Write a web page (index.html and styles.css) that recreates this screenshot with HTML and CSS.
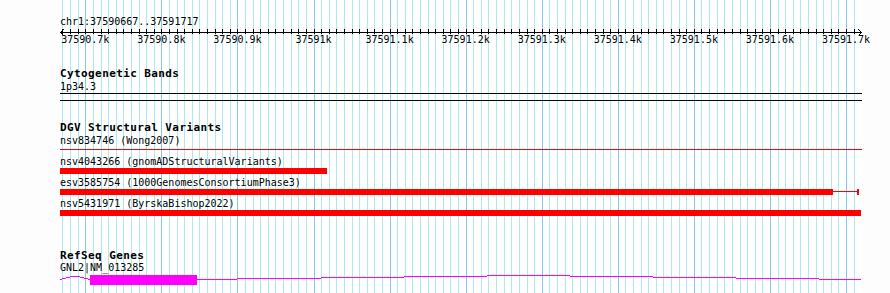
FILE: index.html
```html
<!DOCTYPE html>
<html lang="en">
<head>
  <meta charset="UTF-8">
  <meta name="viewport" content="width=device-width, initial-scale=1.0">
  <title>Genome Browser</title>
  <link rel="stylesheet" href="styles.css">
</head>
<body>
  <div class="browser">
    <svg class="grid" id="grid" width="890" height="293"></svg>

    <div class="tracks">
      <div class="ruler">
        <div class="locus">chr1:37590667..37591717</div>
        <svg class="axis" id="axis" width="802" height="6"></svg>
        <div class="tick-labels" id="tick-labels"></div>
      </div>

      <section class="track cyto">
        <h2>Cytogenetic Bands</h2>
        <div class="label">1p34.3</div>
        <div class="band"></div>
      </section>

      <section class="track dgv">
        <h2>DGV Structural Variants</h2>
        <div class="feature">
          <div class="label">nsv834746 (Wong2007)</div>
          <div class="bar-row"><div class="span-line" style="width: 802px"></div></div>
        </div>
        <div class="feature">
          <div class="label">nsv4043266 (gnomADStructuralVariants)</div>
          <div class="bar-row"><div class="bar" style="width: 267px"></div></div>
        </div>
        <div class="feature">
          <div class="label">esv3585754 (1000GenomesConsortiumPhase3)</div>
          <div class="bar-row">
            <div class="bar" style="width: 773px"></div>
            <div class="connector" style="width: 24px"></div>
            <div class="cap"></div>
          </div>
        </div>
        <div class="feature">
          <div class="label">nsv5431971 (ByrskaBishop2022)</div>
          <div class="bar-row"><div class="bar" style="width: 801px"></div></div>
        </div>
      </section>

      <section class="track refseq">
        <h2>RefSeq Genes</h2>
        <div class="label">GNL2|NM_013285</div>
        <svg class="gene" width="802" height="10">
          <polyline points="0,4.5 12,1.5 18,1.5 30,4.5" />
          <rect class="exon" x="30" y="0" width="107" height="10" />
          <path d="M137 4.5H177 M177 3.5H261 M261 2.5H344 M344 1.5H427 M427 0.5H510 M510 1.5H593 M593 2.5H676 M676 3.5H759 M759 4.5H801" />
        </svg>
      </section>
    </div>
  </div>

  <script>
    const ns = 'http://www.w3.org/2000/svg';
    const viewLeft = 60;
    const viewRight = 862;
    const xOf = bp => 85.3 + (bp - 37590700) * 0.7607;

    const line = (svg, x1, y1, x2, y2, cls) => {
      const el = document.createElementNS(ns, 'line');
      el.setAttribute('x1', x1);
      el.setAttribute('y1', y1);
      el.setAttribute('x2', x2);
      el.setAttribute('y2', y2);
      if (cls) el.setAttribute('class', cls);
      svg.appendChild(el);
    };

    const grid = document.getElementById('grid');
    const axis = document.getElementById('axis');
    const labels = document.getElementById('tick-labels');

    // white track area behind the grid
    const bg = document.createElementNS(ns, 'rect');
    bg.setAttribute('x', viewLeft);
    bg.setAttribute('y', 0);
    bg.setAttribute('width', viewRight - viewLeft);
    bg.setAttribute('height', 293);
    bg.setAttribute('class', 'view-bg');
    grid.appendChild(bg);

    for (let bp = 37590670; bp <= 37591710; bp += 10) {
      const x = Math.round(xOf(bp)) + 0.5;
      const major = bp % 100 === 0;
      line(grid, x, 0, x, 293, major ? 'major' : 'minor');
      line(axis, x - viewLeft, 1, x - viewLeft, 6);
      if (major) {
        const label = document.createElement('span');
        label.textContent = (bp / 1000) + 'k';
        label.style.left = (xOf(bp) - viewLeft) + 'px';
        labels.appendChild(label);
      }
    }

    // axis line with arrow heads
    line(axis, 0, 4.5, 802, 4.5);
    line(axis, 0.5, 4.5, 3.5, 1.5);
    line(axis, 0.5, 4.5, 3.5, 7.5);
    line(axis, 801.5, 4.5, 798.5, 1.5);
    line(axis, 801.5, 4.5, 798.5, 7.5);
  </script>
</body>
</html>
```

FILE: styles.css
```css
* {
  box-sizing: border-box;
  margin: 0;
  padding: 0;
}

body {
  font-family: "DejaVu Sans Mono", monospace;
  font-size: 10px;
  color: #000;
  background-color: #fcfdfc;
}

.browser {
  position: relative;
  width: 890px;
  height: 293px;
  overflow: hidden;
}

.grid {
  position: absolute;
  top: 0;
  left: 0;
}

.grid .view-bg {
  fill: #fff;
}

.grid line {
  stroke-width: 1;
  shape-rendering: crispEdges;
}

.grid .minor {
  stroke: #aee9ee;
}

.grid .major {
  stroke: #82c9ea;
}

.tracks {
  position: relative;
  width: 802px;
  margin-left: 60px;
  padding-top: 16px;
}

.locus,
.label {
  height: 12px;
  line-height: 12px;
  white-space: nowrap;
}

.axis {
  display: block;
  overflow: visible;
}

.axis line {
  stroke: #000;
  stroke-width: 1;
  shape-rendering: crispEdges;
}

.tick-labels {
  position: relative;
  height: 12px;
  line-height: 12px;
}

.tick-labels span {
  position: absolute;
  top: 0;
  transform: translateX(-50%);
  white-space: nowrap;
}

.track h2 {
  height: 14px;
  font-size: 11px;
  line-height: 14px;
  font-weight: bold;
  letter-spacing: 0.4px;
}

.cyto {
  margin-top: 21px;
}

.band {
  height: 8px;
  border-top: 1px solid #000;
  border-bottom: 1px solid #000;
}

.dgv {
  margin-top: 20px;
}

.feature {
  margin-bottom: 3px;
}

.bar-row {
  display: flex;
  align-items: flex-start;
  height: 6px;
}

.bar {
  height: 6px;
  background-color: #f00;
}

.span-line,
.connector {
  height: 1px;
  margin-top: 2px;
  background-color: #f00;
}

.cap {
  width: 2px;
  height: 6px;
  background-color: #f00;
}

.refseq {
  margin-top: 33px;
}

/* keep the underscore of the name clear of the exon box */
.refseq .label {
  line-height: 10px;
}

.gene {
  display: block;
  shape-rendering: crispEdges;
}

.gene polyline,
.gene path {
  fill: none;
  stroke: #f0f;
  stroke-width: 1;
}

.gene .exon {
  fill: #f0f;
}
```
